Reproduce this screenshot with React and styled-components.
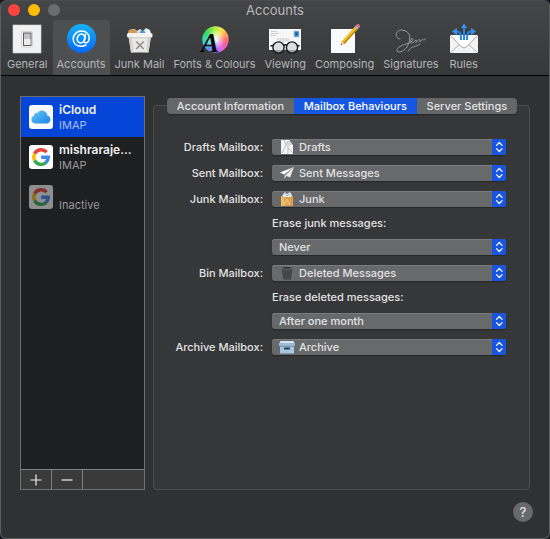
import React, { useState } from 'react';
import styled, { createGlobalStyle } from 'styled-components';

const GlobalStyle = createGlobalStyle`
	* {
		box-sizing: border-box;
	}
	body {
		margin: 0;
		background: #14161c;
		color: #e2e2e3;
		font-family: Inter, "Liberation Sans", sans-serif;
		font-size: 11px;
	}
	button, select {
		font: inherit;
		color: inherit;
		border: 0;
		margin: 0;
		padding: 0;
		background: none;
	}
`;

const Window = styled.div`
	min-height: 100vh;
	display: flex;
	flex-direction: column;
	background: #303132;
	border: 1px solid #5b5c5e;
	border-top-color: #4a4b4d;
	border-radius: 6px;
	overflow: hidden;
`;

const Header = styled.header`
	background: linear-gradient(#434547, #37383a);
	border-bottom: 1px solid #000;
`;

const TitleBar = styled.div`
	display: grid;
	grid-template-columns: 1fr auto 1fr;
	align-items: center;
	height: 17px;
`;

const Lights = styled.div`
	display: flex;
	gap: 8px;
	padding-left: 7px;
`;

const Light = styled.button`
	width: 12px;
	height: 12px;
	border-radius: 50%;
	background: ${props => props.$color};
`;

const Title = styled.h1`
	margin: 0;
	font-size: 13px;
	font-weight: 400;
	line-height: 16px;
	color: #b9babb;
`;

const Toolbar = styled.nav`
	display: flex;
	gap: 1px;
	padding: 2px 2px 0;
`;

const Tool = styled.button`
	display: flex;
	flex-direction: column;
	align-items: center;
	height: 55px;
	padding: 3px 4px 0;
	border-radius: 4px 4px 0 0;
	line-height: 14px;
	white-space: nowrap;
	color: #b4b5b6;
	background: ${props => (props.$active ? '#4e4f51' : 'none')};
	svg {
		display: block;
		margin-bottom: 2px;
		overflow: visible;
	}
`;

const Main = styled.main`
	flex: 1;
	display: flex;
	gap: 8px;
	padding: 20px 19px 0;
`;

const Sidebar = styled.aside`
	flex: 0 0 125px;
	display: flex;
	flex-direction: column;
	background: #1e1f21;
	border: 1px solid #6d6e70;
`;

const AccountList = styled.div`
	flex: 1;
`;

const Account = styled.button`
	display: flex;
	align-items: center;
	gap: 6px;
	width: 100%;
	height: 40px;
	padding: 0 8px;
	text-align: left;
	background: ${props => (props.$active ? '#0546d8' : 'none')};
	svg {
		flex: none;
		opacity: ${props => (props.$inactive ? 0.5 : 1)};
	}
`;

const AccountName = styled.div`
	height: 16px;
	font-size: 12px;
	font-weight: 600;
	line-height: 16px;
	color: #f0f0f0;
	white-space: nowrap;
`;

const AccountKind = styled.div`
	line-height: 14px;
	color: ${props => (props.$active ? '#a5bdf2' : '#98999a')};
`;

const ListButtons = styled.div`
	display: flex;
	height: 20px;
	background: #3a3a3b;
	border-top: 1px solid #808182;
`;

const ListButton = styled.button`
	display: flex;
	align-items: center;
	justify-content: center;
	width: 31px;
	border-right: 1px solid #808182;
`;

const Panel = styled.section`
	flex: 1;
	margin-top: 9px;
	border: 1px solid #4d4e50;
	border-radius: 4px;
	background: #363738;
`;

const Tabs = styled.div`
	display: flex;
	margin: -8px 12px 0 13px;
	border-radius: 4px;
	overflow: hidden;
	background: #656668;
	box-shadow: 0 1px 1px #252627;
`;

const Tab = styled.button`
	flex: 1 1 auto;
	height: 16px;
	line-height: 16px;
	font-weight: 500;
	white-space: nowrap;
	background: ${props => (props.$active ? '#1556e2' : 'none')};
	color: ${props => (props.$active ? '#fff' : '#e2e2e3')};
`;

const Form = styled.form`
	display: grid;
	grid-template-columns: 109px 1fr;
	gap: 10px 9px;
	padding: 25px 23px 20px 0;
`;

const RowLabel = styled.label`
	grid-column: 1;
	text-align: right;
	font-weight: 500;
	line-height: 16px;
	white-space: nowrap;
`;

const NoteLabel = styled.label`
	grid-column: 2;
	font-weight: 500;
	line-height: 12px;
`;

const PopUp = styled.div`
	grid-column: 2;
	position: relative;
	height: 16px;
`;

const Select = styled.select`
	appearance: none;
	display: block;
	width: 100%;
	height: 16px;
	padding-left: ${props => (props.$hasIcon ? '27px' : '7px')};
	border-radius: 3px;
	background: #68696b;
	box-shadow: 0 1px 1px #252627, inset 0 1px 0 #7a7b7d;
	font-weight: 500;
	line-height: 16px;
`;

const PopUpIcon = styled.span`
	position: absolute;
	top: 0;
	left: 7px;
	pointer-events: none;
	svg {
		display: block;
	}
`;

const PopUpArrows = styled.span`
	position: absolute;
	top: 0;
	right: 0;
	width: 14px;
	height: 16px;
	border-radius: 0 3px 3px 0;
	background: #1856e0;
	pointer-events: none;
	svg {
		display: block;
	}
`;

const Footer = styled.footer`
	display: flex;
	justify-content: flex-end;
	padding: 12px 16px 16px;
`;

const Help = styled.button`
	width: 20px;
	height: 20px;
	border-radius: 50%;
	background: #68696b;
	font-size: 13px;
	font-weight: 500;
	line-height: 20px;
`;

const Svg = ({ size = 32, children }) => (
	<svg width={size} height={size} viewBox={`0 0 ${size} ${size}`} aria-hidden="true">{children}</svg>
);

const GeneralIcon = () => (
	<Svg>
		<rect x="2" y="2" width="28" height="28" fill="#f1f1f2" stroke="#d5d5d6" strokeWidth=".6" />
		<rect x="10.5" y="8.5" width="11" height="15.5" rx="1" fill="#fff" stroke="#c9c9ca" strokeWidth=".8" />
		<rect x="12.5" y="10" width="7.5" height="12.5" fill="#c3c4c6" stroke="#58595b" />
		<rect x="13" y="16" width="6.5" height="6" fill="#ededee" />
	</Svg>
);

const AccountsIcon = () => (
	<Svg>
		<defs>
			<linearGradient id="at" x1="0" y1="0" x2="0" y2="1">
				<stop offset="0" stopColor="#16b4f7" />
				<stop offset="1" stopColor="#0566fa" />
			</linearGradient>
		</defs>
		<circle cx="16.5" cy="15.5" r="14.6" fill="url(#at)" />
		<g fill="none" stroke="#fff" strokeWidth="1.7" strokeLinecap="round">
			<ellipse cx="16" cy="15.5" rx="3.7" ry="4.5" transform="rotate(18 16 15.5)" />
			<path d="M20.4 11.3l-1.1 6.2c-.4 2.2 1 2.6 2.2 2.2 2-.7 2.7-2.8 2.7-4.8 0-4-3.2-6.8-7.5-6.8-4.9 0-8.5 3.4-8.5 7.9 0 4.3 3.2 7.2 7.9 7.2 2 0 3.6-.4 4.9-1.2" strokeWidth="1.5" />
		</g>
	</Svg>
);

const JunkMailIcon = () => (
	<Svg>
		<path d="M4 12l1-5 5-1 3 2 3-2 3 2 3-3 4 2 1 4v3z" fill="#dfe8ee" />
		<path d="M4 11l1-4 7-.5 2 4.500z" fill="#d79a4b" />
		<path d="M15 11l2-4 4 1.500 1 3z" fill="#4e9bc9" />
		<path d="M21 11l3-4.500 3 4z" fill="#fff" />
		<path d="M4.5 13h22.500L24.500 29.500H7z" fill="#eae9e5" />
		<path d="M4.5 13h3l2 16.5H7zM23.500 13H27l-2.500 16.500h-2z" fill="#d4d3cf" />
		<rect x="3" y="10" width="25.500" height="4.500" rx="1.500" fill="#f3f2ee" />
		<path d="M4 14.800h23.500" stroke="#bdbcb8" strokeWidth=".7" />
		<path d="M12.200 18.500l7.500 7.500M19.700 18.500L12.200 26" stroke="#8d8d88" strokeWidth="1.500" />
	</Svg>
);

const wheel = ['#f9e34b', '#fba65a', '#fb6c6c', '#f45bb0', '#d868ed', '#8d6cf2', '#5f8cf6', '#3ac8e8', '#36dcae', '#2fd96b', '#6be64a', '#c2ee49'];

const FontsIcon = () => (
	<Svg>
		<defs>
			<radialGradient id="glow">
				<stop offset="0" stopColor="#fff" stopOpacity=".95" />
				<stop offset="1" stopColor="#fff" stopOpacity="0" />
			</radialGradient>
			<clipPath id="disc"><circle cx="17.5" cy="16.5" r="13.2" /></clipPath>
			<filter id="mix"><feGaussianBlur stdDeviation="1.400" /></filter>
		</defs>
		<g clipPath="url(#disc)">
			<g filter="url(#mix)">
				{wheel.map((color, i) => (
					<path key={color} d="M17.500 16.500L13.500 -3h8z" fill={color} stroke={color} strokeWidth="2" transform={`rotate(${i * 30 + 35} 17.5 16.5)`} />
				))}
			</g>
		</g>
		<circle cx="17.5" cy="16.5" r="10" fill="url(#glow)" />
		<text x="3" y="29" fontFamily="Liberation Serif, serif" fontSize="27" fontStyle="italic" fontWeight="700" fill="#0a0a0c">A</text>
	</Svg>
);

const ViewingIcon = () => (
	<Svg>
		<rect x="0" y="6" width="32" height="21" fill="#f7f7f8" />
		<path d="M2 8.500h6M2 10.500h8M2 12.500h5M8 16h13M10 18h10" stroke="#a5a6a9" strokeWidth=".7" strokeDasharray="2 .6" />
		<rect x="25" y="8" width="5" height="6" fill="#3d8fd1" stroke="#b2c7da" strokeWidth=".6" />
		<rect x="26.500" y="9.500" width="2" height="2.500" fill="#164f7c" />
		<g fill="#d0d1d3" fillOpacity=".65" stroke="#17181a" strokeWidth="1.400">
			<circle cx="9.500" cy="24.500" r="5.600" />
			<circle cx="23" cy="24.500" r="5.600" />
			<path d="M14.500 22.500q1.700-1.600 3.500 0M4 22.500l-2.500.5M28.500 22.500l2 .5" fill="none" />
		</g>
	</Svg>
);

const ComposingIcon = () => (
	<Svg>
		<rect x="2" y="6" width="24" height="24" fill="#fafafa" />
		<path d="M25.500 4l3 2.500-13 14.500-3-2.500z" fill="#f5bf25" />
		<path d="M27.500 5.700l1 .8-13 14.500-1.200-1z" fill="#bd7e13" />
		<path d="M12.500 18.500l3 2.500-3.600 1z" fill="#e5c190" />
		<path d="M12.200 20.700l.9.900-1.500.7z" fill="#222" />
		<path d="M25.500 4l1.300-1.400 3 2.500L28.500 6.500z" fill="#b7babd" />
		<path d="M26.800 2.600l1.200-1.400q2.500-.8 3.200 2.200l-1.400 1.700z" fill="#df6f8b" />
	</Svg>
);

const SignaturesIcon = () => (
	<Svg>
		<path d="M5 16C-1 15 0 7 7 7c9 1 9 9 6 15-2 5-9 9-11 6-1-4 6-6 12-8 3-1 5-4 3.500-4.500-2.500 0-3.500 5-.5 4.500 2 0 3-3 4-3s-1 3 0 2.500 2-3 3.500-3-.5 3 .5 2.500 2-3 3-2.500-.5 1.500 2.500-.5M13 28c3-5 8-4 12-7" fill="none" stroke="#98999b" strokeWidth="1" strokeLinecap="round" />
	</Svg>
);

const RulesIcon = () => (
	<Svg>
		<rect x="2" y="12" width="28" height="18" fill="#f3f3f4" />
		<path d="M2 30l10.500-9.500M30 30l-10.500-9.500" stroke="#b0b1b3" />
		<path d="M2 12l11.500 12q2.500 2 5 0L30 12" fill="#fff" stroke="#9fa0a3" />
		<g fill="none" stroke="#2b84e8" strokeWidth="2">
			<path d="M16 17V4M13 17c0-6-.5-8.500-4.500-8.500M19 17c0-6 .5-8.500 4.500-8.500" />
		</g>
		<path d="M16 .5l3.200 4.500h-6.400zM4 8.500l5-3.700v7.400zM28 8.500l-5-3.700v7.400z" fill="#3992f2" />
	</Svg>
);

const ICloudIcon = () => (
	<Svg size={24}>
		<defs>
			<linearGradient id="cloud" x1="0" y1="0" x2="1" y2="1">
				<stop offset="0" stopColor="#62c8f5" />
				<stop offset="1" stopColor="#1d82e8" />
			</linearGradient>
		</defs>
		<rect width="24" height="24" rx="3" fill="#f8f9fa" />
		<path d="M6 18.500a4 4 0 0 1-1-7.700 3 3 0 0 1 3.500-2.900 5.400 5.400 0 0 1 9.800 2.600A4.100 4.100 0 0 1 18 18.500z" fill="url(#cloud)" />
	</Svg>
);

const GoogleIcon = () => (
	<Svg size={24}>
		<rect width="24" height="24" rx="3" fill="#fff" />
		<g fill="none" strokeWidth="3.400">
			<path d="M17.600 7.200A7.300 7.300 0 0 0 5.600 8.800" stroke="#ea4335" />
			<path d="M5.600 8.800a7.300 7.300 0 0 0 0 6.600" stroke="#fbbc05" />
			<path d="M5.600 15.400a7.300 7.300 0 0 0 11.500 2" stroke="#34a853" />
			<path d="M12.200 12.300h7.100a7.300 7.300 0 0 1-2.400 5.200" stroke="#4285f4" />
		</g>
	</Svg>
);

const DraftsIcon = () => (
	<Svg size={16}>
		<path d="M2 1h8l4 5v9H2z" fill="#f4f4f5" />
		<path d="M10 1v5h4z" fill="#cfd0d2" />
		<path d="M3 14L9 2M9 2v13M5 1l2 5M9 9l5 5" fill="none" stroke="#a5a6a8" strokeWidth=".7" />
	</Svg>
);

const SentIcon = () => (
	<Svg size={16}>
		<path d="M15 2L1 7.500l4 2z" fill="#fff" />
		<path d="M15 2L5 9.500V14l2.500-3 3.500 1.500z" fill="#ececed" />
		<path d="M15 2L5 9.500V14l1.500-3.500z" fill="#919294" />
	</Svg>
);

const JunkIcon = () => (
	<Svg size={16}>
		<path d="M4 7l-.5-3L6 1l2 2 3-2 2 3-.5 3z" fill="#e3e9ed" />
		<path d="M6 2l2 3 3-2" fill="none" stroke="#8aa7ba" strokeWidth=".8" />
		<path d="M2 5l3 1h6l3-1v10H2z" fill="#dca04a" />
		<path d="M2 5l3 1v9H2z" fill="#efbb67" />
		<path d="M8 8l1.500 2.500h-3zM6 11l-1 2h3M10 11l1 2H9" fill="none" stroke="#f3cf92" strokeWidth=".8" />
	</Svg>
);

const BinIcon = () => (
	<Svg size={16}>
		<path d="M2.500 3h11L12 14.500H4.500z" fill="#414244" />
		<path d="M5 4l1 10M8 4v10M11 4l-1 10" stroke="#505153" strokeWidth=".7" />
		<ellipse cx="8" cy="2.800" rx="5.700" ry="1.300" fill="#2b2c2e" stroke="#808183" strokeWidth=".7" />
	</Svg>
);

const ArchiveIcon = () => (
	<Svg size={16}>
		<path d="M1.500 2h13l1.500 3H0z" fill="#d6e7f5" />
		<rect x="0" y="4" width="16" height="3" fill="#9dbbd5" />
		<rect x="1" y="7" width="14" height="7.500" fill="#a8c6df" />
		<path d="M1 7.300h14" stroke="#5c7893" strokeWidth=".7" />
		<rect x="5" y="8.500" width="6" height="2" rx=".5" fill="#27394b" />
	</Svg>
);

const tools = [
	{ name: 'General', icon: <GeneralIcon /> },
	{ name: 'Accounts', icon: <AccountsIcon /> },
	{ name: 'Junk Mail', icon: <JunkMailIcon /> },
	{ name: 'Fonts & Colours', icon: <FontsIcon /> },
	{ name: 'Viewing', icon: <ViewingIcon /> },
	{ name: 'Composing', icon: <ComposingIcon /> },
	{ name: 'Signatures', icon: <SignaturesIcon /> },
	{ name: 'Rules', icon: <RulesIcon /> },
];

const accounts = [
	{ name: 'iCloud', kind: 'IMAP', icon: <ICloudIcon /> },
	{ name: 'mishraraje...', kind: 'IMAP', icon: <GoogleIcon /> },
	{ name: '', kind: 'Inactive', icon: <GoogleIcon />, inactive: true },
];

const tabs = ['Account Information', 'Mailbox Behaviours', 'Server Settings'];

const mailboxes = [
	{ id: 'drafts', label: 'Drafts Mailbox:', value: 'Drafts', icon: <DraftsIcon /> },
	{ id: 'sent', label: 'Sent Mailbox:', value: 'Sent Messages', icon: <SentIcon /> },
	{ id: 'junk', label: 'Junk Mailbox:', value: 'Junk', icon: <JunkIcon /> },
	{ id: 'erase-junk', note: 'Erase junk messages:', value: 'Never' },
	{ id: 'bin', label: 'Bin Mailbox:', value: 'Deleted Messages', icon: <BinIcon /> },
	{ id: 'erase-deleted', note: 'Erase deleted messages:', value: 'After one month' },
	{ id: 'archive', label: 'Archive Mailbox:', value: 'Archive', icon: <ArchiveIcon /> },
];

const MailboxRow = ({ id, label, note, value, icon }) => (
	<>
		{label && <RowLabel htmlFor={id}>{label}</RowLabel>}
		{note && <NoteLabel htmlFor={id}>{note}</NoteLabel>}
		<PopUp>
			<Select id={id} $hasIcon={!!icon}>
				<option>{value}</option>
			</Select>
			{icon && <PopUpIcon>{icon}</PopUpIcon>}
			<PopUpArrows>
				<svg width="14" height="16" viewBox="0 0 14 16" aria-hidden="true">
					<path d="M4.500 6.300L7.300 3.500l2.800 2.800M4.500 9.700l2.800 2.800 2.800-2.800" fill="none" stroke="#fff" strokeWidth="1.200" strokeLinecap="round" strokeLinejoin="round" />
				</svg>
			</PopUpArrows>
		</PopUp>
	</>
);

export default function App() {
	const [tool, setTool] = useState('Accounts');
	const [account, setAccount] = useState(0);
	const [tab, setTab] = useState('Mailbox Behaviours');

	return (
		<Window>
			<GlobalStyle />
			<Header>
				<TitleBar>
					<Lights>
						<Light $color="#fc4540" aria-label="Close" />
						<Light $color="#fdbc06" aria-label="Minimise" />
						<Light $color="#6b6c6e" aria-label="Zoom" disabled />
					</Lights>
					<Title>Accounts</Title>
				</TitleBar>
				<Toolbar>
					{tools.map(item => (
						<Tool key={item.name} $active={item.name === tool} onClick={() => setTool(item.name)}>
							{item.icon}
							{item.name}
						</Tool>
					))}
				</Toolbar>
			</Header>
			<Main>
				<Sidebar>
					<AccountList>
						{accounts.map((item, i) => (
							<Account key={i} $active={i === account} $inactive={item.inactive} onClick={() => setAccount(i)}>
								{item.icon}
								<div>
									<AccountName>{item.name}</AccountName>
									<AccountKind $active={i === account}>{item.kind}</AccountKind>
								</div>
							</Account>
						))}
					</AccountList>
					<ListButtons>
						<ListButton aria-label="Add account">
							<svg width="12" height="12" viewBox="0 0 12 12"><path d="M6 .5v11M.5 6h11" stroke="#eee" strokeWidth="1.200" /></svg>
						</ListButton>
						<ListButton aria-label="Remove account">
							<svg width="12" height="12" viewBox="0 0 12 12"><path d="M.5 6h11" stroke="#eee" strokeWidth="1.200" /></svg>
						</ListButton>
					</ListButtons>
				</Sidebar>
				<Panel>
					<Tabs>
						{tabs.map(name => (
							<Tab key={name} $active={name === tab} onClick={() => setTab(name)}>{name}</Tab>
						))}
					</Tabs>
					<Form>
						{mailboxes.map(item => <MailboxRow key={item.id} {...item} />)}
					</Form>
				</Panel>
			</Main>
			<Footer>
				<Help aria-label="Help">?</Help>
			</Footer>
		</Window>
	);
}
